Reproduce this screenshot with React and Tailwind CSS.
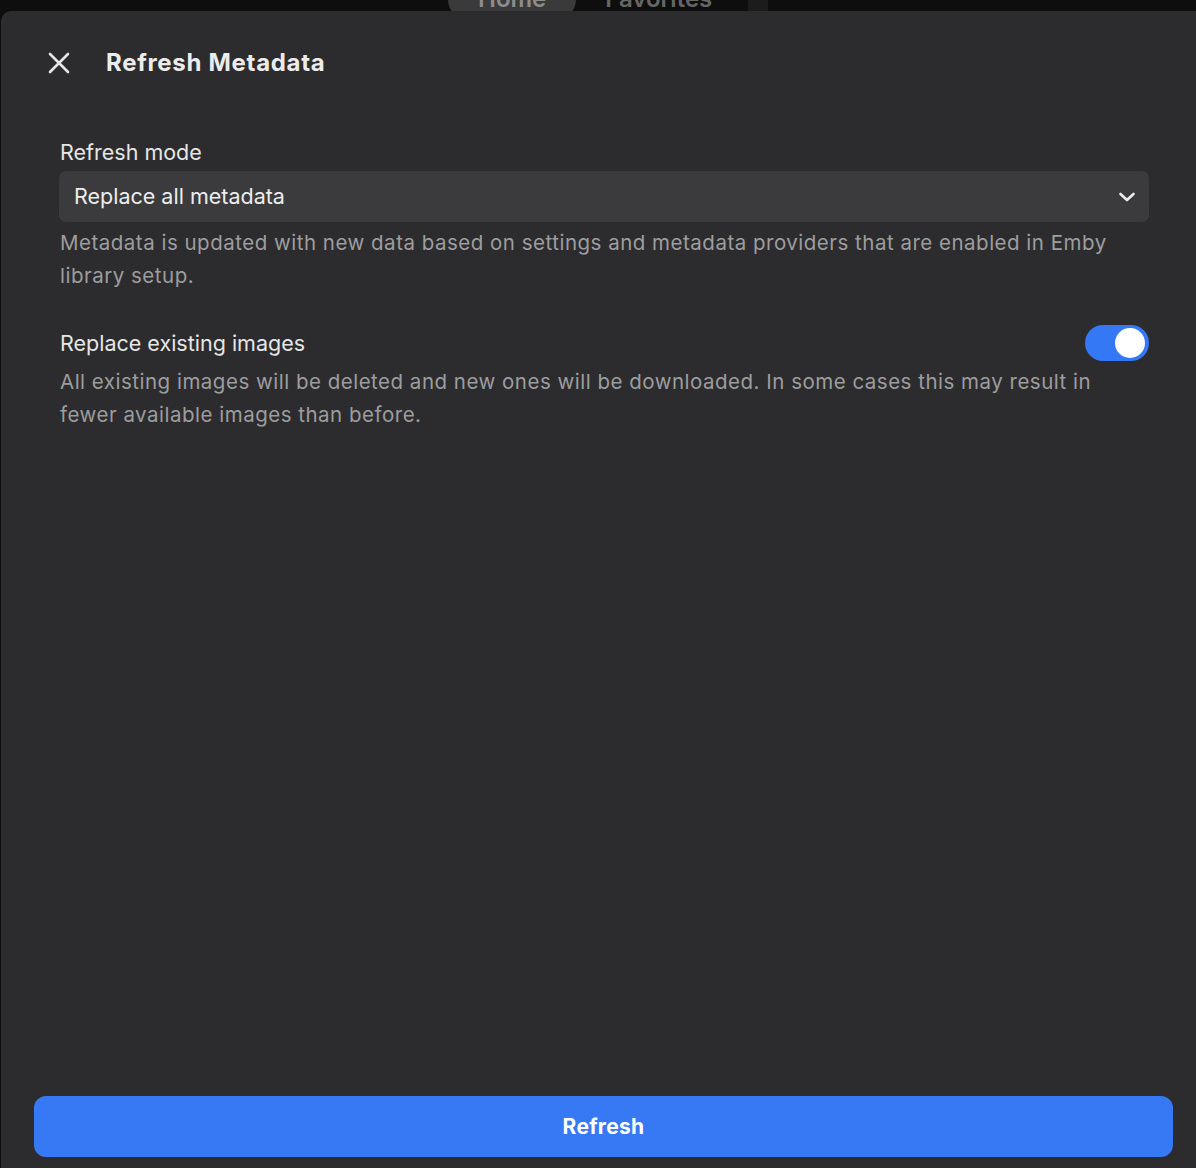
import React from "react";

export default function App() {
  const font = { fontFamily: "Inter, 'Noto Sans', sans-serif" };
  return (
    <div className="w-[1196px] h-[1168px] overflow-hidden bg-[#0d0d0d] flex flex-col" style={font}>
      {/* Background page header (mostly hidden behind dialog) */}
      <div className="h-[11px] overflow-hidden shrink-0 bg-[#0e0e0e]">
        <div className="flex items-center gap-[29px] pl-[448px] -mt-[23px]">
          <div className="h-[44px] px-[30px] rounded-full bg-[#3a3a3a] flex items-center text-[24px] leading-none font-semibold text-[#8c8c8c]">
            Home
          </div>
          <div className="h-[44px] flex items-center text-[24px] leading-none font-semibold text-[#666666]">
            Favorites
          </div>
          <div className="h-[44px] w-[20px] rounded-full bg-[#1c1c1c] ml-[7px]" />
        </div>
      </div>

      {/* Dialog */}
      <div className="ml-[1px] w-[1205px] h-[1157px] shrink-0 bg-[#2c2c2e] rounded-tl-[10px] rounded-tr-[10px] flex flex-col">
        <div className="h-[104px] flex items-center pl-[47px] shrink-0">
          <button className="w-[22px] h-[22px] flex items-center justify-center text-[#e6e6e6]">
            <svg width="22" height="22" viewBox="0 0 22 22" fill="none" stroke="currentColor" strokeWidth="2.6" strokeLinecap="round">
              <path d="M2 2 L20 20 M20 2 L2 20" />
            </svg>
          </button>
          <h1 className="ml-[36px] text-[24px] font-bold text-[#ececec] tracking-[0.7px]">Refresh Metadata</h1>
        </div>

        <div className="pl-[58px] pr-[57px] pt-[23px]">
          <div className="pl-[1px] text-[21.5px] leading-[28px] text-[#e6e6e6]">Refresh mode</div>
          <div className="mt-[5px] h-[51px] rounded-[7px] bg-[#3b3b3d] flex items-center justify-between pl-[15px] pr-[10px]">
            <span className="text-[21.5px] text-[#ededed]">Replace all metadata</span>
            <svg width="24" height="24" viewBox="0 0 24 24" fill="none" stroke="#ededed" strokeWidth="2.6" strokeLinecap="round" strokeLinejoin="round">
              <path d="M5.5 9 L12 15 L18.5 9" />
            </svg>
          </div>
          <p className="mt-[4px] pl-[1px] text-[20.5px] tracking-[0.5px] leading-[33px] text-[#9d9d9f]">
            Metadata is updated with new data based on settings and metadata providers that are enabled in Emby library setup.
          </p>

          <div className="mt-[33px] h-[36px] flex items-center justify-between">
            <span className="pl-[1px] text-[21.5px] text-[#e6e6e6]">Replace existing images</span>
            <div className="w-[64px] h-[36px] rounded-full bg-[#3478f6] flex items-center justify-end pr-[4px]">
              <div className="w-[30px] h-[30px] rounded-full bg-white" />
            </div>
          </div>
          <p className="mt-[4px] pl-[1px] text-[20.5px] tracking-[0.5px] leading-[33px] text-[#9d9d9f]">
            All existing images will be deleted and new ones will be downloaded. In some cases this may result in fewer available images than before.
          </p>
        </div>

        <div className="mt-auto px-[33px] pb-[11px]">
          <button className="w-full h-[61px] rounded-[12px] bg-[#3779f5] text-white text-[21px] font-bold tracking-[0.3px] flex items-center justify-center">
            Refresh
          </button>
        </div>
      </div>
    </div>
  );
}
